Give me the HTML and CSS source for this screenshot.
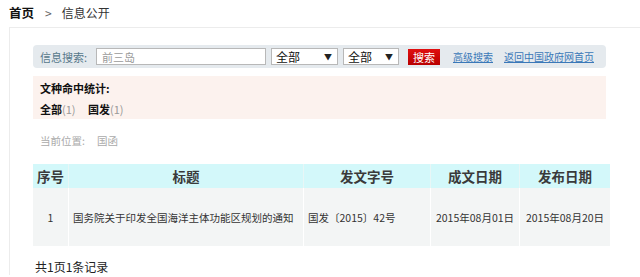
FILE: index.html
```html
<!DOCTYPE html>
<html>
<head>
	<title>信息公开</title>
	<link rel="stylesheet" href="styles.css">
</head>
<body>
	<div class="crumb">
		<a class="crumb-home" href="#">首页</a>
		<span class="crumb-sep">&gt;</span>
		<span>信息公开</span>
	</div>

	<div class="panel">
		<!-- search bar -->
		<form class="search">
			<label class="search-label">信息搜索:</label>
			<input class="search-input" type="text" value="前三岛">
			<div class="pick pick-a"><span>全部</span><span class="arrow">▼</span></div>
			<div class="pick pick-b"><span>全部</span><span class="arrow">▼</span></div>
			<button class="search-btn" type="button">搜索</button>
			<a class="search-link" href="#">高级搜索</a>
			<a class="search-link" href="#">返回中国政府网首页</a>
		</form>

		<!-- hit stats -->
		<div class="stats">
			<div class="stats-title">文种命中统计:</div>
			<div class="stats-list">
				<span>全部<em>(1)</em></span>
				<span>国发<em>(1)</em></span>
			</div>
		</div>

		<div class="where">当前位置:<span class="where-val">国函</span></div>

		<!-- result table -->
		<table class="result">
			<thead>
				<tr>
					<th class="c-no">序号</th>
					<th class="c-title">标题</th>
					<th class="c-code">发文字号</th>
					<th class="c-date">成文日期</th>
					<th class="c-date2">发布日期</th>
				</tr>
			</thead>
			<tbody>
				<tr>
					<td class="center">1</td>
					<td>国务院关于印发全国海洋主体功能区规划的通知</td>
					<td>国发〔2015〕42号</td>
					<td class="center">2015年08月01日</td>
					<td class="center">2015年08月20日</td>
				</tr>
			</tbody>
		</table>

		<div class="pager">共1页1条记录</div>
	</div>
</body>
</html>
```

FILE: styles.css
```css
html, body {
  height: 277px;
  overflow: hidden;
}

body {
  margin: 0;
  font-family: "Noto Sans CJK SC", "Open Sans", sans-serif;
  font-size: 11px;
  color: #333;
  background: #fff;
}

/* breadcrumb */
.crumb {
  height: 28px;
  padding-left: 9px;
  display: flex;
  align-items: center;
  font-size: 12px;
  color: #333;
  margin-top: -2px;
}

.crumb-home {
  font-weight: bold;
  color: #111;
  text-decoration: none;
  font-size: 12.5px;
}

.crumb-sep {
  margin: 0 10px 0 11px;
  color: #666;
}

/* panel */
.panel {
  margin-left: 9px;
  margin-top: 1px;
  width: 607px;
  height: 230px;
  border: 1px solid #ececec;
  border-right: none;
  border-bottom: none;
  padding: 17px 0 0 23px;
}

/* search bar */
.search {
  width: 573px;
  height: 23px;
  box-sizing: border-box;
  background: #e5eaee;
  border-radius: 4px;
  display: flex;
  align-items: center;
  padding-left: 7px;
  margin: 0;
  white-space: nowrap;
}

.search-label {
  color: #56788a;
  font-size: 11px;
  width: 56px;
}

.search-input {
  width: 170px;
  height: 17px;
  box-sizing: border-box;
  border: 1px solid #b8b8b8;
  padding: 0 5px;
  font-family: inherit;
  font-size: 11px;
  color: #9a9a9a;
  background: #fff;
}

.pick {
  height: 17px;
  box-sizing: border-box;
  border: 1px solid #b8b8b8;
  background: #fff;
  display: flex;
  align-items: center;
  justify-content: space-between;
  padding: 0 5px 0 4px;
  font-size: 12px;
  color: #111;
}

.pick-a {
  width: 67px;
  margin-left: 5px;
}

.pick-b {
  width: 56px;
  margin-left: 5px;
}

.arrow {
  font-size: 8px;
  color: #222;
}

.search-btn {
  margin-left: 9px;
  width: 32px;
  height: 16px;
  border: none;
  background: linear-gradient(#e01010, #b80000);
  color: #fff;
  font-family: inherit;
  font-size: 11px;
  padding: 0;
  line-height: 16px;
}

.search-link {
  margin-left: 13px;
  color: #3a78b8;
  font-size: 10px;
  text-decoration: underline;
}

.search-link + .search-link {
  margin-left: 11px;
}

/* stats */
.stats {
  width: 573px;
  height: 43px;
  margin-top: 8px;
  background: #fcf2ee;
  box-sizing: border-box;
  padding: 3px 0 0 7px;
}

.stats-title {
  font-weight: bold;
  color: #111;
  height: 18px;
  line-height: 18px;
}

.stats-list {
  margin-top: 3px;
  font-weight: bold;
  color: #111;
  line-height: 18px;
}

.stats-list span {
  margin-right: 10px;
}

.stats-list em {
  font-style: normal;
  font-weight: normal;
  color: #999;
}

/* location */
.where {
  margin-top: 13px;
  padding-left: 7px;
  color: #aaa;
  font-size: 10.5px;
  height: 18px;
  line-height: 18px;
}

.where-val {
  margin-left: 12px;
}

/* table */
.result {
  margin-top: 14px;
  width: 573px;
  border-collapse: collapse;
  table-layout: fixed;
}

.result th {
  height: 24px;
  background: #d3f8fa;
  color: #3a3a3a;
  font-size: 13.5px;
  font-weight: bold;
  padding: 0;
  border-right: 1px solid #e8f6f6;
}

.result td {
  height: 58px;
  background: #f3f5f5;
  padding: 0 0 0 4px;
  font-size: 10.5px;
  color: #333;
  border-right: 1px solid #fff;
}

.result td.center {
  text-align: center;
  padding: 0;
}

.result th:last-child,
.result td:last-child {
  border-right: none;
}

.c-no { width: 35px; }
.c-title { width: 234px; }
.c-code { width: 126px; }
.c-date { width: 88px; }
.c-date2 { width: 90px; }

.pager {
  margin-top: 12px;
  padding-left: 2px;
  font-size: 12px;
  color: #222;
}
```
